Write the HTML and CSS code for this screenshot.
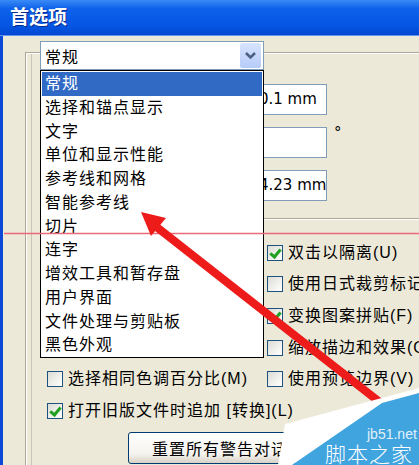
FILE: index.html
```html
<!DOCTYPE html>
<html lang="zh-CN">
<head>
  <meta charset="UTF-8" />
  <title>首选项</title>
  <link rel="stylesheet" href="styles.css">
</head>
<body>
  <div class="window">
    <div class="titlebar">首选项</div>

    <div class="client">
      <div class="combo">
        <span class="combo-value">常规</span>
        <span class="combo-btn">
          <svg width="21" height="25" viewBox="0 0 21 25"><path d="M6 10 L10.5 14.5 L15 10" fill="none" stroke="#4d6185" stroke-width="2.6"/></svg>
        </span>
      </div>

      <div class="group">
        <div class="fields">
          <div class="field-row"><div class="field">0.1 mm</div></div>
          <div class="field-row"><div class="field"></div><span class="unit">°</span></div>
          <div class="field-row"><div class="field">4.23 mm</div></div>
        </div>

        <div class="groove"></div>

        <div class="checks">
          <span></span>
          <label class="check"><span class="box on"></span>双击以隔离(U)</label>
          <span></span>
          <label class="check"><span class="box"></span>使用日式裁剪标记</label>
          <span></span>
          <label class="check"><span class="box on"></span>变换图案拼贴(F)</label>
          <span></span>
          <label class="check"><span class="box"></span>缩放描边和效果(O)</label>
          <label class="check"><span class="box"></span>选择相同色调百分比(M)</label>
          <label class="check"><span class="box"></span>使用预览边界(V)</label>
          <label class="check wide"><span class="box on"></span>打开旧版文件时追加 [转换](L)</label>
        </div>

        <button class="reset">重置所有警告对话框</button>
      </div>
    </div>

    <ul class="dropdown">
      <li class="sel">常规</li>
      <li>选择和锚点显示</li>
      <li>文字</li>
      <li>单位和显示性能</li>
      <li>参考线和网格</li>
      <li>智能参考线</li>
      <li>切片</li>
      <li>连字</li>
      <li>增效工具和暂存盘</li>
      <li>用户界面</li>
      <li>文件处理与剪贴板</li>
      <li>黑色外观</li>
    </ul>

    <svg class="overlay" width="419" height="465" viewBox="0 0 419 465">
      <line x1="4" y1="233.5" x2="419" y2="233.5" stroke="#ea6b78" stroke-width="1.6"/>
      <line x1="154" y1="225" x2="405" y2="422" stroke="#ee1b1b" stroke-width="8"/>
      <polygon points="141,212 166,218 151,236" fill="#ee1b1b"/>
      <polygon points="285,424 419,388 419,393 292,465 278,465" fill="#fff"/>
      <polygon points="292,465 382,403 419,393 419,465" fill="#40a4de"/>
      <text x="367" y="439" class="wm-url">jb51.net</text>
      <text x="325" y="462" class="wm-name">脚本之家</text>
    </svg>
  </div>
</body>
</html>
```

FILE: styles.css
```css
* {
  box-sizing: border-box;
  margin: 0;
  padding: 0;
}

body {
  background: #ece9d8;
  font-family: "Liberation Sans", "Noto Sans CJK SC", sans-serif;
  font-size: 16px;
  letter-spacing: 1px;
  color: #000;
}

.window {
  position: relative;
  width: 419px;
  height: 465px;
  overflow: hidden;
  background: #ece9d8;
}

.titlebar {
  height: 36px;
  padding-left: 10px;
  line-height: 35px;
  font-size: 19px;
  font-weight: bold;
  letter-spacing: 0;
  color: #fff;
  text-shadow: 1px 1px 0 #0a2a8c;
  background: linear-gradient(#3a8af6 0%, #0d61ea 25%, #0657e4 70%, #0348d2 100%);
  border-bottom: 1px solid #5f95ee;
}

.client {
  height: 429px;
  padding-top: 5px;
  border-left: 3px solid #0a4ad6;
}

/* combo box */
.combo {
  position: relative;
  z-index: 1;
  display: flex;
  align-items: center;
  justify-content: space-between;
  width: 224px;
  height: 29px;
  margin-left: 37px;
  padding: 0 2px 0 4px;
  background: #fff;
  border: 1px solid #7f9db9;
}

.combo-btn {
  display: flex;
  width: 21px;
  height: 25px;
  border-radius: 2px;
  background: linear-gradient(#d8e4fd, #b5cbf8);
}

/* group box */
.group {
  width: 420px;
  height: 420px;
  margin: -18px 0 0 22px;
  border-top: 1px solid #aca899;
  border-left: 1px solid #aca899;
  box-shadow: inset 1px 1px 0 #fff, inset 5px 0 0 #ece9d8, inset 6px 0 0 #c9c5b5;
}

.fields {
  padding: 31px 0 0 174px;
}

.field-row {
  display: flex;
  align-items: flex-start;
  gap: 7px;
  margin-bottom: 12px;
}

.field-row:last-child {
  margin-bottom: 0;
}

.field {
  width: 127px;
  height: 31px;
  padding-left: 58px;
  overflow: hidden;
  white-space: nowrap;
  background: #fff;
  border: 1px solid #7f9db9;
  font-family: "DejaVu Sans", sans-serif;
  font-size: 15px;
  letter-spacing: 0;
  line-height: 29px;
}

.unit {
  font-family: "DejaVu Sans", sans-serif;
  font-size: 15px;
  line-height: 12px;
}

.groove {
  width: 240px;
  height: 2px;
  margin: 17px 0 0 174px;
  border-top: 1px solid #aca899;
  border-bottom: 1px solid #fff;
}

/* checkboxes */
.checks {
  display: grid;
  grid-template-columns: 220px 1fr;
  grid-auto-rows: 31.6px;
  margin-top: 17px;
  padding-left: 21px;
}

.check {
  display: flex;
  align-items: center;
  gap: 5px;
  white-space: nowrap;
  line-height: 20px;
}

.check.wide {
  grid-column: span 2;
}

.box {
  position: relative;
  flex: none;
  width: 16px;
  height: 16px;
  border: 1px solid #1c5180;
  background: linear-gradient(135deg, #dcdcd5, #fff);
}

.box.on::after {
  content: "";
  position: absolute;
  left: 4px;
  top: 1px;
  width: 4px;
  height: 8px;
  border: solid #21a121;
  border-width: 0 3px 3px 0;
  transform: rotate(40deg);
}

.reset {
  height: 32px;
  margin: 5px 0 0 102px;
  padding: 0 23px;
  font: inherit;
  letter-spacing: 1px;
  border: 1px solid #003c74;
  border-radius: 3px;
  background: linear-gradient(#fff, #f4f3ee 70%, #d8d2c6);
}

/* open dropdown list */
.dropdown {
  position: absolute;
  left: 40px;
  top: 70px;
  width: 224px;
  height: 288px;
  padding: 1px;
  list-style: none;
  background: #fff;
  border: 1px solid #000;
}

.dropdown li {
  height: 23.75px;
  padding-left: 3px;
  line-height: 23.75px;
}

.dropdown li.sel {
  background: #316ac5;
  color: #fff;
}

.overlay {
  position: absolute;
  left: 0;
  top: 0;
  pointer-events: none;
}

.wm-url {
  font-family: "Liberation Sans", sans-serif;
  font-size: 14px;
  letter-spacing: 0;
  fill: #e2f1fb;
}

.wm-name {
  font-family: "Noto Sans CJK SC", sans-serif;
  font-size: 21px;
  font-weight: 300;
  letter-spacing: 1px;
  fill: #fff;
}
```
